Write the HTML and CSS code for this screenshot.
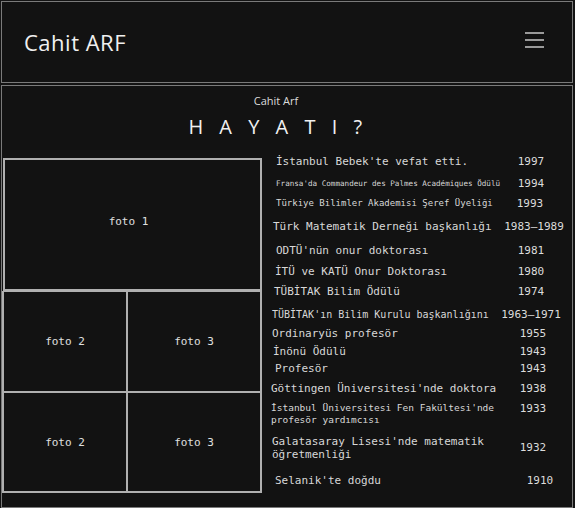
FILE: index.html
```html
<!DOCTYPE html>
<html lang="tr">
<head>
<meta charset="utf-8">
<title>Cahit ARF</title>
<link rel="stylesheet" href="styles.css">
</head>
<body>
<div class="page">
  <header class="topbar">
    <div class="brand">Cahit ARF</div>
    <button class="menu" aria-label="Menü"><span></span><span></span><span></span></button>
  </header>
  <main class="content">
    <div class="heading">
      <div class="kicker">Cahit Arf</div>
      <h1 class="title">H A Y A T I ?</h1>
    </div>
    <div class="body">
      <div class="photos">
        <div class="photo photo--main">foto 1</div>
        <div class="photo-grid">
          <div class="photo">foto 2</div>
          <div class="photo">foto 3</div>
          <div class="photo">foto 2</div>
          <div class="photo">foto 3</div>
        </div>
      </div>
      <ul class="timeline">
        <li><span class="event">İstanbul Bebek'te vefat etti.</span><span class="year">1997</span></li>
        <li><span class="event">Fransa'da Commandeur des Palmes Académiques Ödülü</span><span class="year">1994</span></li>
        <li><span class="event">Türkiye Bilimler Akademisi Şeref Üyeliği</span><span class="year">1993</span></li>
        <li><span class="event">Türk Matematik Derneği başkanlığı</span><span class="year">1983–1989</span></li>
        <li><span class="event">ODTÜ'nün onur doktorası</span><span class="year">1981</span></li>
        <li><span class="event">İTÜ ve KATÜ Onur Doktorası</span><span class="year">1980</span></li>
        <li><span class="event">TÜBİTAK Bilim Ödülü</span><span class="year">1974</span></li>
        <li><span class="event">TÜBİTAK'ın Bilim Kurulu başkanlığını</span><span class="year">1963–1971</span></li>
        <li><span class="event">Ordinaryüs profesör</span><span class="year">1955</span></li>
        <li><span class="event">İnönü Ödülü</span><span class="year">1943</span></li>
        <li><span class="event">Profesör</span><span class="year">1943</span></li>
        <li><span class="event">Göttingen Üniversitesi'nde doktora</span><span class="year">1938</span></li>
        <li class="wrap"><span class="event">İstanbul Üniversitesi Fen Fakültesi'nde profesör yardımcısı</span><span class="year">1933</span></li>
        <li class="wrap"><span class="event">Galatasaray Lisesi'nde matematik öğretmenliği</span><span class="year">1932</span></li>
        <li><span class="event">Selanik'te doğdu</span><span class="year">1910</span></li>
      </ul>
    </div>
  </main>
</div>
</body>
</html>
```
FILE: styles.css
```css
* { box-sizing: border-box; }
html, body { margin: 0; padding: 0; background: #131313; }
body { color: #e6e6e6; font-family: "DejaVu Sans Mono", monospace; }

.page { padding: 1px 2px 1px 1px; display: flex; flex-direction: column; gap: 2px; }

.topbar {
  height: 82px;
  border: 1px solid #7a7a7a;
  display: flex;
  align-items: center;
  justify-content: space-between;
  padding: 0 28px 0 22px;
  background: #121212;
}
.brand {
  font-family: "Open Sans", sans-serif;
  font-size: 22px;
  letter-spacing: 0.5px;
  color: #f0f0f0;
}
.menu {
  width: 19px; height: 16px;
  margin-bottom: 4px;
  padding: 0; border: 0; background: none;
  display: flex; flex-direction: column; justify-content: space-between;
}
.menu span { display: block; height: 2px; background: #9a9a9a; }

.content {
  border: 1px solid #7a7a7a;
  background: #121212;
  padding-bottom: 12px;
}
.heading {
  display: flex; flex-direction: column; align-items: center;
  padding: 9px 0 11px;
}
.kicker {
  font-family: "Open Sans", sans-serif;
  font-size: 11px; line-height: 12px; color: #dcdcdc;
  margin-right: 22px;
}
.title {
  margin: 8px 18px 0 0;
  font-family: "Open Sans", sans-serif;
  font-weight: 400;
  font-size: 20px; line-height: 24px;
  letter-spacing: 5.5px;
  color: #f0f0f0;
}

.body { display: flex; }

.photos { width: 262px; padding-top: 8px; flex-shrink: 0; }
.photo {
  display: flex; align-items: center; justify-content: center;
  font-size: 11px; color: #e0e0e0;
  border: 1px solid #b0b0b0;
}
.photo--main {
  margin-left: 1px; width: 259px; height: 133px;
  border-width: 2px;
  padding: 0 8px 7px 0;
}
.photo-grid {
  width: 260px;
  border: 1px solid #b0b0b0; border-top: 0;
  display: grid;
  grid-template-columns: 124px 134px;
  grid-template-rows: 101px 100px;
}

.timeline {
  list-style: none; margin: 0; padding: 0 8px 0 7px;
  flex: 1; min-width: 0;
}
.timeline li {
  display: flex; align-items: center;
  font-size: 11px; line-height: 13px;
}
.event { flex: 1; min-width: 0; color: #d8d8d8; white-space: nowrap; }
.wrap .event { white-space: normal; }
.year { width: 66px; flex-shrink: 0; text-align: center; color: #dcdcdc; font-size: 11px; }

.timeline li:nth-child(1) { height: 23px; padding-left: 5px; }
.timeline li:nth-child(2) { height: 21px; padding-left: 5px; }
.timeline li:nth-child(2) .event { font-size: 7.6px; }
.timeline li:nth-child(3) { height: 19px; padding-left: 5px; }
.timeline li:nth-child(3) .event { font-size: 9px; }
.timeline li:nth-child(3) .year { padding-right: 2px; }
.timeline li:nth-child(4) { height: 27px; padding-left: 2px; }
.timeline li:nth-child(4) .year { padding-left: 6px; }
.timeline li:nth-child(5) { height: 21px; padding-left: 5px; }
.timeline li:nth-child(6) { height: 20px; padding-left: 4px; }
.timeline li:nth-child(7) { height: 21px; padding-left: 3px; }
.timeline li:nth-child(8) { height: 22px; padding-left: 1px; padding-top: 2px; }
.timeline li:nth-child(8) .event { font-size: 10px; }
.timeline li:nth-child(9) { height: 18px; padding-left: 1px; }
.timeline li:nth-child(10) { height: 18px; padding-left: 2px; }
.timeline li:nth-child(11) { height: 17px; padding-left: 4px; }
.timeline li:nth-child(12) { height: 22px; padding-left: 0; }
.timeline li:nth-child(n+9):nth-child(-n+14) .year { padding-left: 4px; }
.timeline li:nth-child(13) { height: 31px; align-items: flex-start; padding-top: 3px; }
.timeline li:nth-child(13) .event { font-size: 9.5px; line-height: 12px; }
.timeline li:nth-child(14) { height: 35px; padding-left: 1px; }
.timeline li:nth-child(14) .year { padding-left: 6px; }
.timeline li:nth-child(15) { height: 30px; padding-left: 4px; }
.timeline li:nth-child(15) .year { padding-left: 18px; }
```
